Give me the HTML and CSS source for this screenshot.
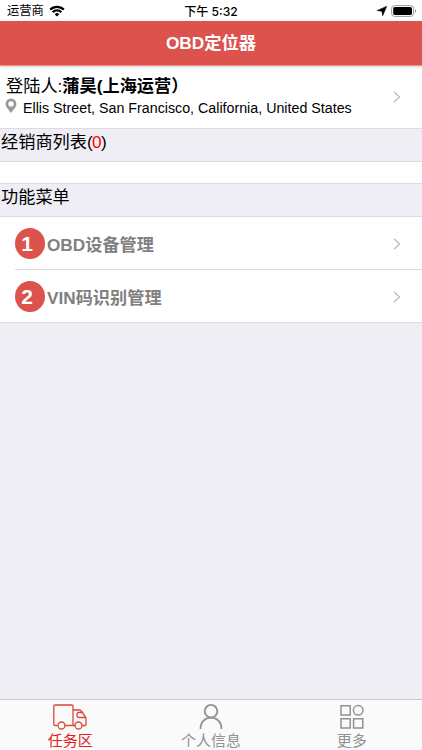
FILE: index.html
```html
<!DOCTYPE html>
<html lang="zh-CN">
<head>
<meta charset="utf-8">
<title>OBD定位器</title>
<link rel="stylesheet" href="styles.css">
</head>
<body>
<div class="app">
  <div class="status">
    <div class="carrier"><span>运营商</span>
      <svg width="16" height="12" viewBox="0 0 16 12" fill="none" stroke="#000" stroke-width="2.2"><path d="M1.200 4.600a9.600 9.600 0 0 1 13.600 0M3.700 7.200a6.100 6.100 0 0 1 8.600 0"/><path d="M8 11.500 5.700 9.200a3.300 3.300 0 0 1 4.600 0z" fill="#000" stroke="none"/></svg>
    </div>
    <div class="time">下午 5:32</div>
    <div class="power">
      <svg width="10" height="10" viewBox="0 0 10 10"><path d="M9.600.4 5.700 9.600 5 5.200.4 4.500z" stroke="#000" stroke-width=".7" stroke-linejoin="round"/></svg>
      <svg width="26" height="12" viewBox="0 0 26 12"><rect x=".6" y=".6" width="22" height="10.800" rx="3" fill="#fff" stroke="#999"/><rect x="2.200" y="2.100" width="18.800" height="7.800" rx="1.600"/><path d="M24 4v4c1.600-.7 1.600-3.300 0-4z" fill="#999"/></svg>
    </div>
  </div>
  <header class="navbar">OBD定位器</header>
  <main class="content">
    <div class="user">
      <div class="user-info">
        <div class="name">登陆人:<b>蒲昊(上海运营）</b></div>
        <div class="place">
          <svg width="12" height="16" viewBox="0 0 12 16"><path d="M6 .5A5.400 5.400 0 0 0 .6 5.900C.6 9 3.500 11 6 15c2.500-4 5.400-6 5.400-9.100A5.400 5.400 0 0 0 6 .5zm0 2.700a2.700 2.700 0 1 1 0 5.400 2.700 2.700 0 0 1 0-5.400z" fill="#999" fill-rule="evenodd"/></svg>
          <span>Ellis Street, San Francisco, California, United States</span>
        </div>
      </div>
      <svg class="chevron" width="8" height="12" viewBox="0 0 8 12"><path d="m1 .7 5.500 5.300L1 11.300"/></svg>
    </div>
    <h2 class="section">经销商列表<span class="total">(<span class="count">0</span>)</span></h2>
    <div class="empty"></div>
    <h2 class="section">功能菜单</h2>
    <div class="menu">
      <div class="row"><span class="badge">1</span><span class="label">OBD设备管理</span><svg class="chevron" width="8" height="12" viewBox="0 0 8 12"><path d="m1 .7 5.500 5.300L1 11.300"/></svg></div>
      <div class="row"><span class="badge">2</span><span class="label">VIN码识别管理</span><svg class="chevron" width="8" height="12" viewBox="0 0 8 12"><path d="m1 .7 5.500 5.300L1 11.300"/></svg></div>
    </div>
  </main>
  <nav class="tabs">
    <div class="tab active">
      <svg width="34" height="26" viewBox="0 0 34 26"><path d="M4.500 21.500H1.800q-1 0-1-1V2q0-1 1-1H19q1 0 1 1v19.500h-8.500M20 6h6.200q1.200 0 2 1l3.600 5q1.200 1.500 1.200 3.500v5q0 1-1 1h-3M22.500 21.500H20M30.300 8.500h-4.500q-1.800 0-1.800 2v1.200q0 1.800 1.800 1.800h6.700"/><circle cx="8.500" cy="21.500" r="3.500"/><circle cx="25.500" cy="21.500" r="3.500"/></svg>
      <span>任务区</span>
    </div>
    <div class="tab">
      <svg class="person" width="24" height="26" viewBox="0 0 24 26"><circle cx="12" cy="7.200" r="6.300"/><path d="M1.500 25c0-7 4.600-11.300 10.500-11.300S22.500 18 22.500 25"/></svg>
      <span>个人信息</span>
    </div>
    <div class="tab">
      <svg width="24" height="26" viewBox="0 0 24 26"><path d="M1 1.700h9.200v9.200H1zM1 14.700h9.200v9.200H1zM13.600 14.700h9.200v9.200h-9.200z"/><circle cx="18.200" cy="6.300" r="4.800"/></svg>
      <span>更多</span>
    </div>
  </nav>
</div>
</body>
</html>
```
FILE: styles.css
```css
* { box-sizing: border-box; }
body {
  margin: 0;
  font-family: "Liberation Sans", "Noto Sans CJK SC", sans-serif;
  color: #000;
}
svg { display: block; flex: none; }
.app {
  height: 750px;
  display: flex;
  flex-direction: column;
  background: #efeef4;
  overflow: hidden;
}
.status {
  height: 21px;
  display: grid;
  grid-template-columns: 1fr auto 1fr;
  align-items: center;
  padding: 0 7px;
  background: #fff;
  font-size: 12.3px;
  line-height: 21px;
}
.carrier, .power { display: flex; align-items: center; }
.carrier { gap: 5px; }
.carrier span { padding-top: 1px; }
.power { gap: 4px; justify-content: flex-end; margin-right: -2px; }
.time { font-family: Inter, "Noto Sans CJK SC", sans-serif; font-size: 12.1px; font-weight: 500; }
.navbar {
  height: 45px;
  flex: none;
  background: #dc524d;
  border-bottom: 1px solid #ef8f8c;
  color: #fff;
  font-size: 17.3px;
  font-weight: bold;
  line-height: 45px;
  text-align: center;
  box-shadow: 0 1px 3px rgba(0, 0, 0, .18);
  z-index: 1;
}
.content { flex: 1; }
.user {
  height: 62px;
  display: flex;
  align-items: center;
  justify-content: space-between;
  padding: 0 21px 1px 6px;
  background: #fff;
}
.name { font-size: 17.2px; line-height: 24px; white-space: nowrap; }
.place {
  display: flex;
  align-items: center;
  gap: 5px;
  margin-top: -1px;
  font-size: 14.25px;
  line-height: 22px;
  white-space: nowrap;
}
.place svg { margin: -5px 1px 0 -1px; }
.chevron { fill: none; stroke: #bdbdc0; stroke-width: 1.3; }
.section {
  height: 34px;
  margin: 0;
  padding-left: 1px;
  border: solid #dcdbe0;
  border-width: 1px 0;
  font-size: 17.2px;
  font-weight: normal;
  line-height: 27px;
}
.total { letter-spacing: -.6px; }
.count { color: #f00; }
.empty { height: 21px; background: #fff; }
.menu { background: #fff; border-bottom: 1px solid #dcdbe0; padding-left: 15px; }
.row {
  height: 52px;
  display: flex;
  align-items: center;
  padding: 1px 21px 0 0;
}
.row + .row { height: 53px; border-top: 1px solid #dcdbe0; }
.badge {
  width: 30px;
  height: 31px;
  margin-right: 2px;
  padding-right: 6px;
  border-radius: 50%;
  background: #dc524d;
  color: #fff;
  font-size: 21px;
  font-weight: bold;
  line-height: 31px;
  text-align: center;
}
.label { flex: 1; padding-top: 2px; color: #808080; font-size: 17.2px; font-weight: bold; line-height: 24px; }
.tabs {
  height: 51px;
  display: grid;
  grid-template-columns: repeat(3, 1fr);
  border-top: 1px solid #c9c8cd;
  background: #fafafa;
}
.tab {
  display: flex;
  flex-direction: column;
  align-items: center;
  padding-top: 4px;
  color: #929292;
  font-size: 15px;
  line-height: 21px;
}
.tab svg { fill: none; stroke: currentColor; stroke-width: 1.5; }
.tab .person { stroke-width: 1.8; }
.active { color: #e02020; }
.active svg { stroke: #d64a3c; stroke-width: 1.3; }
```
